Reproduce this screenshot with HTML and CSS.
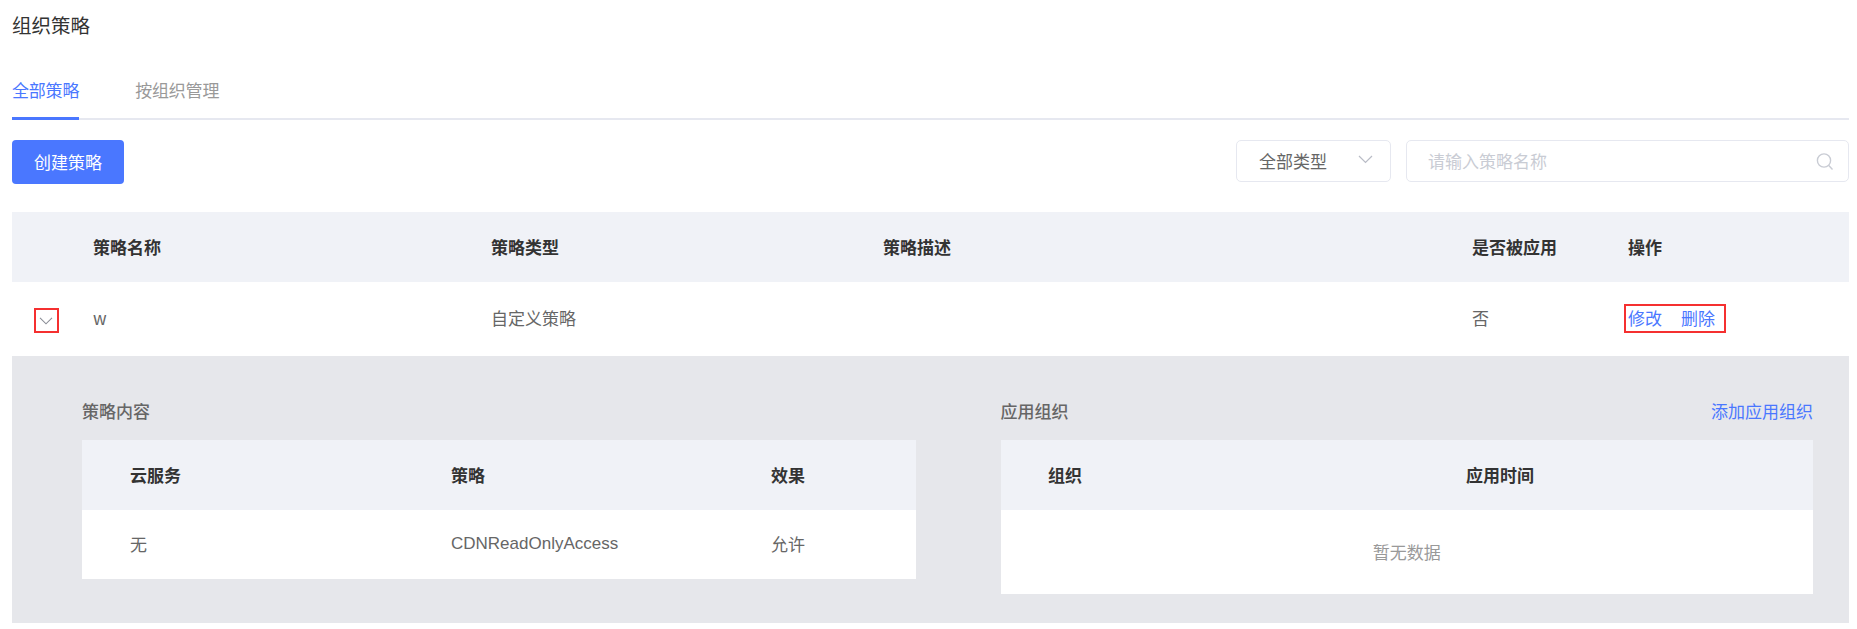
FILE: index.html
```html
<!DOCTYPE html>
<html lang="zh-CN">
<head>
<meta charset="utf-8">
<title>组织策略</title>
<link rel="stylesheet" href="styles.css">
</head>
<body>
<main class="page">
  <h1 class="title">组织策略</h1>
  <nav class="tabs">
    <a class="tab tab-active">全部策略</a>
    <a class="tab">按组织管理</a>
  </nav>
  <div class="toolbar">
    <button class="btn-primary"><span class="btn-label">创建策略</span></button>
    <div class="filters">
      <div class="select">
        <span class="select-label">全部类型</span>
        <svg class="select-arrow" width="15" height="9" viewBox="0 0 15 9"><path d="M1 1 7.5 7.5 14 1" fill="none" stroke="#b9bcc6" stroke-width="1.2"/></svg>
      </div>
      <div class="search">
        <span class="select-label">请输入策略名称</span>
        <svg class="search-icon" width="18" height="18" viewBox="0 0 18 18"><circle cx="8" cy="7.5" r="6.6" fill="none" stroke="#c9ccd4" stroke-width="1.4"/><path d="M12.8 12.5 16.5 16.5" fill="none" stroke="#c9ccd4" stroke-width="1.4"/></svg>
      </div>
    </div>
  </div>

  <section class="table">
    <div class="row row-head main-cols">
      <span></span><span>策略名称</span><span>策略类型</span><span>策略描述</span><span>是否被应用</span><span class="op-head">操作</span>
    </div>
    <div class="row row-body main-cols">
      <span class="expand-cell"><span class="mark expand"><svg class="expand-arrow" width="14" height="8" viewBox="0 0 14 8"><path d="M1 .8 7 6.8 13 .8" fill="none" stroke="#8a8d96" stroke-width="1.1"/></svg></span></span>
      <span>w</span><span>自定义策略</span><span></span><span>否</span>
      <span class="ops-cell"><span class="mark ops"><a class="link">修改</a><a class="link">删除</a></span></span>
    </div>
    <div class="detail">
      <div class="panel panel-left">
        <div class="panel-head"><span class="panel-title">策略内容</span></div>
        <div class="row row-head left-cols"><span>云服务</span><span>策略</span><span>效果</span></div>
        <div class="row row-sub left-cols"><span>无</span><span class="latin">CDNReadOnlyAccess</span><span>允许</span></div>
      </div>
      <div class="panel panel-right">
        <div class="panel-head"><span class="panel-title">应用组织</span><a class="link">添加应用组织</a></div>
        <div class="row row-head right-cols"><span>组织</span><span>应用时间</span></div>
        <div class="empty">暂无数据</div>
      </div>
    </div>
  </section>
</main>
</body>
</html>
```
FILE: styles.css
```css
* { box-sizing: border-box; }
html, body { margin: 0; background: #fff; }
body {
  font-family: "Noto Sans CJK SC", "Liberation Sans", sans-serif;
  font-size: 17px;
  color: #666;
  overflow: hidden;
}
.page { width: 1857px; height: 629px; padding: 0 8px 0 12px; }
.title { margin: 0; height: 52px; font-size: 19.5px; line-height: 50px; font-weight: 400; color: #333; }
.tabs { display: flex; gap: 56px; height: 68px; border-bottom: 2px solid #e6e8f0; }
.tab { height: 68px; line-height: 76px; color: #999; letter-spacing: -0.2px; }
.tab-active { color: #4a77ff; border-bottom: 3px solid #4a77ff; }
.toolbar { display: flex; justify-content: space-between; padding-top: 20px; height: 92px; }
.btn-primary {
  width: 112px; height: 44px; border: 0; border-radius: 4px;
  background: #4a77ff; color: #fff; font: inherit; padding: 0 0 2px;
}
.filters { display: flex; gap: 15px; height: 42px; }
.select, .search {
  display: flex; align-items: center; justify-content: space-between;
  height: 42px; border: 1px solid #e6e8f0; border-radius: 5px; background: #fff;
}
.select { width: 155px; padding: 0 17px 0 22px; }
.search { width: 443px; padding: 0 14px 0 21px; color: #c9ccd4; }
.select-label { margin-bottom: 2px; }
.select-arrow { margin-top: -3px; }
.search-icon { margin-top: 2px; }
.row { display: grid; align-items: center; }
.row-head { height: 70px; padding-bottom: 2px; background: #f0f2f7; color: #333; font-weight: 700; }
.main-cols { grid-template-columns: 81px 398px 392px 589px 156px 1fr; }
.row-body { height: 74px; padding-bottom: 3px; background: #fff; }
.expand-cell { padding-left: 22px; }
.mark { border: 2px solid #f53030; display: inline-flex; align-items: center; }
.expand { width: 25px; height: 25px; justify-content: center; margin-top: 6px; }
.expand-arrow { margin-right: 2px; }
.ops-cell { margin-left: -4px; }
.ops { width: 102px; height: 29px; padding: 0 0 2px 2px; margin-top: 2px; gap: 19px; }
.link { color: #4a77ff; }
.detail {
  display: grid; grid-template-columns: 834px 812.5px; column-gap: 84.5px;
  height: 267px; padding: 0 36px 0 70px; background: #e6e7eb;
}
.panel-head {
  display: flex; justify-content: space-between; align-items: center;
  height: 84px; padding-top: 24px;
}
.panel-title { font-weight: 500; color: #666; }
.left-cols { grid-template-columns: 321px 320px 1fr; padding-left: 48px; }
.right-cols { grid-template-columns: 418px 1fr; padding-left: 47.5px; }
.row-sub { height: 69px; padding-bottom: 2px; background: #fff; }
.latin { font-family: "Liberation Sans", sans-serif; }
.empty { height: 84px; line-height: 84px; text-align: center; background: #fff; color: #999; }
```
